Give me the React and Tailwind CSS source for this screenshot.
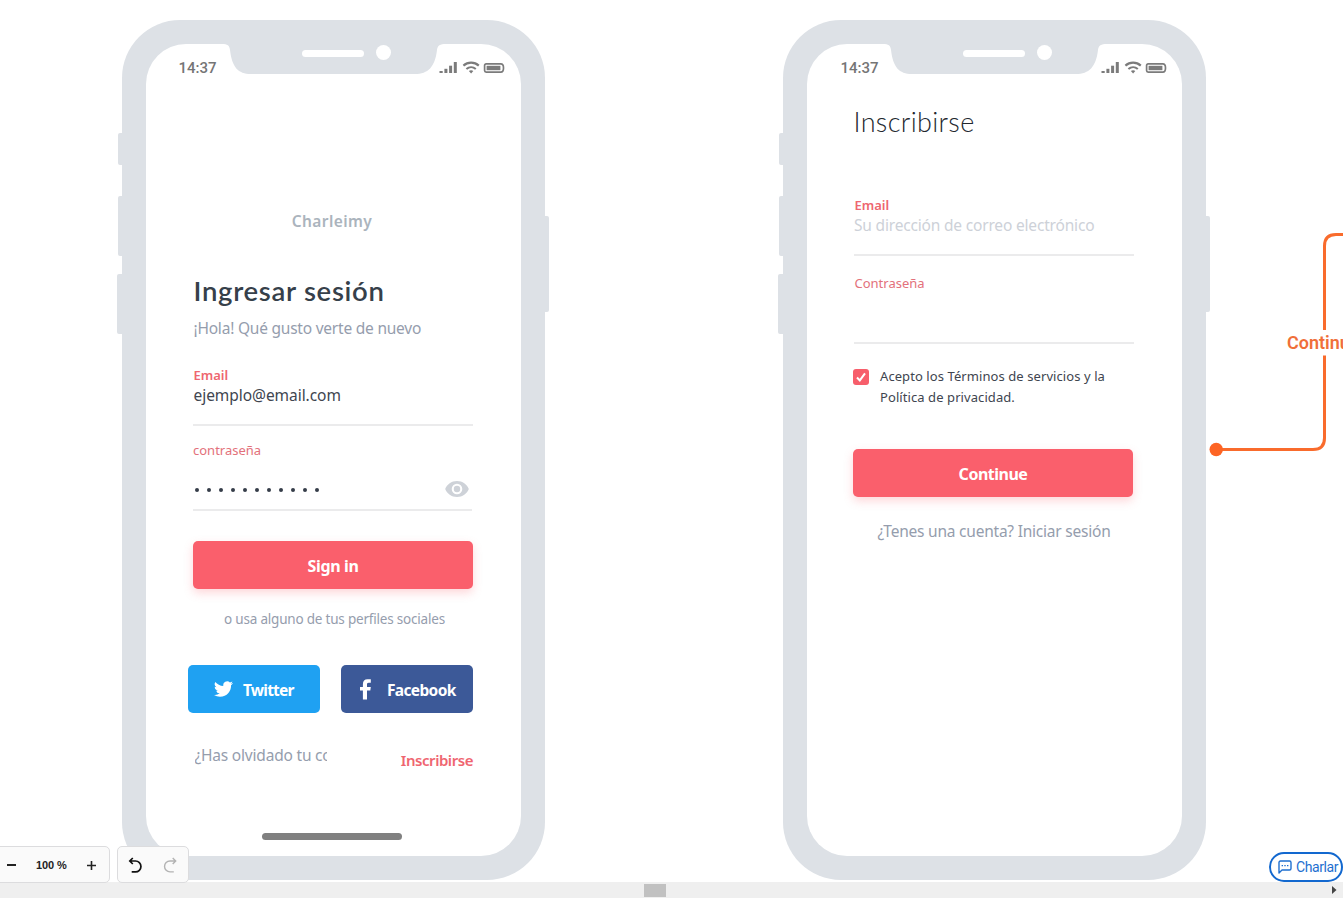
import React from "react";

const SANS = "font-['Noto_Sans','Liberation_Sans',sans-serif]";

function StatusIcons() {
  return (
    <svg width="68" height="14" viewBox="0 0 68 14" fill="#7b7b7b">
      <rect x="0.5" y="10" width="3.2" height="2" />
      <rect x="5.4" y="7.8" width="3" height="4.200" />
      <rect x="10.100" y="4.700" width="3" height="7.300" />
      <rect x="14.800" y="1" width="3" height="11" />
      <g fill="none" stroke="#7b7b7b" strokeWidth="2.100">
        <path d="M24.400 4.600C28.800 .6 35.400 .6 39.800 4.600" />
        <path d="M27.400 8c2.800-2.400 6.600-2.400 9.400 0" />
      </g>
      <path d="M29.900 10c1.300-1 3.100-1 4.400 0l-2.200 2.400z" />
      <path
        d="M47.200 2.900h14.600c1.800 0 2.700 1.700 2.700 4.100s-.9 4.100-2.700 4.100H47.200c-1 0-1.600-.6-1.600-1.600V4.500c0-1 .6-1.600 1.600-1.600z"
        fill="none"
        stroke="#7b7b7b"
        strokeWidth="1.700"
      />
      <rect x="47.600" y="4.800" width="13.800" height="4.400" />
    </svg>
  );
}

function Phone({ className, timeShift, iconShift, children }) {
  return (
    <div className={`absolute top-[19.5px] h-[860px] w-[423px] rounded-[58px] bg-[#dde1e6] p-6 ${className}`}>
      <div className="absolute -left-[4px] top-[113.500px] h-8 w-1 rounded-l-xs bg-[#dde1e6]" />
      <div className="absolute -left-[4px] top-[176.500px] h-[60px] w-1 rounded-l-xs bg-[#dde1e6]" />
      <div className="absolute -left-[5px] top-[254.500px] h-[60px] w-[5px] rounded-l-xs bg-[#dde1e6]" />
      <div className="absolute -right-[3.500px] top-[196.500px] h-24 w-1 rounded-r-xs bg-[#dde1e6]" />
      <div className="relative flex h-full w-full flex-col rounded-[40px] bg-white">
        <svg className="absolute -top-px left-[76px]" width="224" height="32" viewBox="0 0 224 32">
          <path
            d="M0 0V1C5.500 1 7.500 2.500 8 7C10 24 16 31 29 31H193C206 31 213 24 215 7C215.500 2.500 218 1 224 1V0Z"
            fill="#dde1e6"
          />
        </svg>
        <div className="absolute left-[156px] top-[6px] h-[7px] w-[62px] rounded-full bg-white" />
        <div className="absolute left-[230px] top-[1px] size-[15px] rounded-full bg-white" />
        <div className="flex h-12 shrink-0 items-center justify-between pl-[32.500px] pr-[14px]">
          <span className={`pt-[2px] font-['Roboto',sans-serif] text-[15px] font-medium text-[#757575] ${timeShift}`}>14:37</span>
          <span className={iconShift}>
            <StatusIcons />
          </span>
        </div>
        {children}
      </div>
    </div>
  );
}

function PrimaryButton({ children, className }) {
  return (
    <button
      className={`flex h-12 w-[280px] shrink-0 items-center justify-center rounded-[5px] bg-[#fa5f6c] pt-[2px] text-[16px] font-bold text-white shadow-[0_4px_10px_rgba(250,95,108,0.250)] ${className}`}
    >
      {children}
    </button>
  );
}

function SignInScreen() {
  return (
    <div className={`flex flex-1 flex-col pl-[47px] pr-[48px] ${SANS}`}>
      <div className="mt-[119px] h-5 pr-[2px] text-center text-[15.500px] font-semibold leading-5 tracking-[0.400px] text-[#abb4bd]">
        Charleimy
      </div>
      <h1 className="mt-[44px] h-8 whitespace-nowrap pl-[0.500px] font-['Lato',sans-serif] text-[27.500px] font-semibold leading-8 tracking-[0.700px] text-[#36404a]">
        Ingresar sesión
      </h1>
      <p className="mt-[9px] h-6 whitespace-nowrap pl-[0.500px] text-[15.500px] leading-6 tracking-[-0.220px] text-[#959dad]">
        ¡Hola! Qué gusto verte de nuevo
      </p>
      <label className="mt-[25px] h-5 pl-[0.500px] text-[13px] font-semibold leading-5 text-[#ee6670]">Email</label>
      <div className="h-[41px] border-b-2 border-[#ebebec] pl-[0.500px] text-[15.500px] leading-5 tracking-[-0.050px] text-[#40454f]">
        ejemplo@email.com
      </div>
      <label className="mt-[14px] h-5 text-[13px] leading-5 text-[#e3717b]">contraseña</label>
      <div className="mr-[1px] flex h-[51px] items-center justify-between border-b-2 border-[#ebebec] pl-[1.500px] pr-[3px] pt-[9px]">
        <div className="flex gap-[8.100px] pt-[3px]">
          {Array.from({ length: 11 }, (_, i) => (
            <span key={i} className="size-[4px] rounded-full bg-[#353d48]" />
          ))}
        </div>
        <svg width="24" height="16" viewBox="0 0 24 16">
          <path
            fillRule="evenodd"
            fill="#ced2d8"
            d="M12 0C6.500 0 2 3.300 .2 8 2 12.700 6.500 16 12 16s10-3.300 11.800-8C22 3.300 17.500 0 12 0zm0 13.300a5.300 5.300 0 1 1 0-10.600 5.300 5.300 0 0 1 0 10.600zm0-8.500a3.200 3.200 0 1 0 0 6.400 3.200 3.200 0 0 0 0-6.400z"
          />
        </svg>
      </div>
      <PrimaryButton className="mt-[30px] tracking-[-0.350px]">Sign in</PrimaryButton>
      <p className="mt-[20px] h-5 whitespace-nowrap pl-[3px] text-center text-[13.500px] leading-5 tracking-[-0.200px] text-[#959dad]">
        o usa alguno de tus perfiles sociales
      </p>
      <div className="-ml-[5px] mt-[36px] flex gap-[21px]">
        <button className="flex h-12 w-[132px] shrink-0 items-center gap-[10px] rounded-[5px] bg-[#1fa1f2] pl-[26px] text-[15.500px] font-bold tracking-[-0.800px] text-white">
          <svg width="19" height="16" viewBox="0 0 24 20" fill="currentColor">
            <path d="M23.950 2.570a10 10 0 0 1-2.820.770 4.960 4.960 0 0 0 2.160-2.720c-.950.550-2 .950-3.130 1.180a4.920 4.920 0 0 0-8.380 4.480C7.690 6.100 4.070 4.130 1.640 1.160a4.920 4.920 0 0 0 1.520 6.570 4.900 4.900 0 0 1-2.230-.610v.060a4.920 4.920 0 0 0 3.950 4.830 5 5 0 0 1-2.210.080 4.940 4.940 0 0 0 4.600 3.420A9.870 9.870 0 0 1 0 17.540a14 14 0 0 0 7.550 2.210c9.050 0 14-7.500 14-13.980 0-.210 0-.420-.020-.630a9.940 9.940 0 0 0 2.460-2.550z" />
          </svg>
          <span className="pt-[4px]">Twitter</span>
        </button>
        <button className="flex h-12 w-[132px] shrink-0 items-center gap-[16px] rounded-[5px] bg-[#3c5998] pl-[19px] text-[15.500px] font-bold tracking-[-0.650px] text-white">
          <svg className="mt-[2px]" width="11" height="21" viewBox="0 0 11 21" fill="currentColor">
            <path d="M2.900 20.500v-9.100H0V7.900h2.900V5.200C2.900 2 4.600.300 7.500.300H10.800v3.500H8.700C7.300 3.800 7 4.500 7 5.600v2.300h3.800l-.5 3.500H7v9.100z" />
          </svg>
          <span className="pt-[4px]">Facebook</span>
        </button>
      </div>
      <div className="mt-[30px] flex justify-between">
        <div className="ml-[1.500px] h-6 w-[132px] overflow-hidden whitespace-nowrap text-[15.500px] leading-6 tracking-[-0.200px] text-[#959dad]">
          ¿Has olvidado tu contraseña?
        </div>
        <a className="mt-[5px] h-6 text-[15px] font-semibold leading-6 tracking-[-0.450px] text-[#ef6570]">Inscribirse</a>
      </div>
      <div className="ml-[69px] mt-[61px] h-[7px] w-[140px] rounded-full bg-[#808080]" />
    </div>
  );
}

function SignUpScreen() {
  return (
    <div className={`flex flex-1 flex-col pl-[46px] pr-[49px] ${SANS}`}>
      <h1 className="mt-[14px] h-8 whitespace-nowrap pl-[0.500px] font-['Lato',sans-serif] text-[27px] font-light leading-8 tracking-[0.350px] text-[#22272e]">
        Inscribirse
      </h1>
      <label className="mt-[57px] h-5 pl-[1.500px] text-[13px] font-semibold leading-5 text-[#ee6670]">Email</label>
      <div className="ml-px mr-[-1px] h-[41px] whitespace-nowrap border-b-2 border-[#ebebec] text-[15.500px] leading-5 tracking-[-0.180px] text-[#cdd1d8]">
        Su dirección de correo electrónico
      </div>
      <label className="mt-[17px] h-5 pl-[1.500px] text-[13px] leading-5 text-[#e3717b]">Contraseña</label>
      <div className="ml-px mr-[-1px] h-[51px] border-b-2 border-[#ebebec]" />
      <div className="mt-[22px] flex h-[42px] gap-[11px]">
        <svg className="mt-[3px] shrink-0" width="16" height="16" viewBox="0 0 16 16">
          <rect width="16" height="16" rx="3" fill="#f75e6b" />
          <path d="M4 8.500L6.800 11.400L12 4.300" fill="none" stroke="#fff" strokeWidth="2" />
        </svg>
        <p className="whitespace-nowrap text-[13px] leading-[21px] tracking-[0.080px] text-[#40454f]">
          Acepto los Términos de servicios y la
          <br />
          Política de privacidad.
        </p>
      </div>
      <PrimaryButton className="mt-[41px] tracking-[-0.500px]">Continue</PrimaryButton>
      <p className="mt-[22px] h-6 whitespace-nowrap pl-[2px] text-center text-[15.500px] leading-6 tracking-[-0.220px] text-[#959dad]">
        ¿Tenes una cuenta? Iniciar sesión
      </p>
    </div>
  );
}

function Connector() {
  return (
    <div className="absolute left-[1209px] top-[228px] h-[236px] w-[134px]">
      <svg width="134" height="236" viewBox="0 0 134 236" fill="none">
        <path d="M134 6.500H127Q115.500 6.500 115.500 18V102" stroke="#f96b2c" strokeWidth="3" />
        <path d="M115.500 127.500V210Q115.500 221.500 104 221.500H7" stroke="#f96b2c" strokeWidth="3" />
        <circle cx="7.200" cy="221.500" r="6.700" fill="#fd6424" />
      </svg>
      <span className="absolute left-[78px] top-[103px] font-['Roboto',sans-serif] text-[18px] font-semibold leading-6 text-[#f06f39]">
        Continue
      </span>
    </div>
  );
}

function CanvasControls() {
  return (
    <div className="absolute -left-[6px] bottom-[-1px] flex h-[37px] gap-[7px]">
      <div className="flex w-[116px] items-center rounded-[5px] border border-[#dcdcde] bg-[#fafafa] pl-[12px] pt-px font-['Liberation_Sans',sans-serif] font-bold text-[#222]">
        <span className="h-[2px] w-[9px] bg-[#222]" />
        <span className="ml-[20px] w-[32px] whitespace-nowrap pt-px text-[11px] tracking-[-0.100px]">100 %</span>
        <svg className="ml-[18.500px]" width="9" height="9" viewBox="0 0 9 9" stroke="#222" strokeWidth="1.600">
          <path d="M0 4.500H9M4.500 0V9" />
        </svg>
      </div>
      <div className="flex w-[72px] items-center gap-[20px] rounded-[5px] border border-[#dcdcde] bg-[#fafafa] pl-[10px] pt-[2px]">
        <svg width="15" height="17" viewBox="0 0 15 17" fill="none" stroke="#111" strokeWidth="1.700">
          <path d="M4.800 1L1.800 4L4.800 7M1.800 4H7.500A5.300 5.300 0 0 1 7.500 14.900H3.700" />
        </svg>
        <svg width="15" height="17" viewBox="0 0 15 17" fill="none" stroke="#b3b3b3" strokeWidth="1.400">
          <path d="M9.700 1L12.700 4L9.700 7M12.700 4H7A5.300 5.300 0 0 0 7 14.900H10.800" />
        </svg>
      </div>
    </div>
  );
}

function ChatButton() {
  return (
    <button className="absolute bottom-0 left-[1269px] flex h-[30px] w-[74px] items-center gap-[4px] rounded-full border-2 border-[#1268cf] bg-white pl-[7px] font-['Roboto',sans-serif] text-[14px] tracking-[-0.400px] text-[#1e6fd0]">
      <svg className="shrink-0" width="14" height="14" viewBox="0 0 14 14" fill="none" stroke="#1e6fd0" strokeWidth="1.400">
        <path d="M1 13V2.500Q1 1 2.500 1H11.500Q13 1 13 2.500V8.500Q13 10 11.500 10H4Z" strokeLinejoin="round" />
        <path d="M3.600 5.600H5M6.300 5.600H7.700M9 5.600H10.400" />
      </svg>
      <span className="pt-px">Charlar</span>
    </button>
  );
}

export default function App() {
  return (
    <div className="flex h-[898px] w-[1343px] flex-col overflow-hidden bg-white">
      <main className="relative h-[882px] shrink-0">
        <Phone className="left-[122px]" timeShift="" iconShift="">
          <SignInScreen />
        </Phone>
        <Phone className="left-[783px]" timeShift="ml-px" iconShift="-mr-px">
          <SignUpScreen />
        </Phone>
        <Connector />
        <CanvasControls />
        <ChatButton />
      </main>
      <div className="flex h-4 shrink-0 items-center justify-between bg-[#efefef] pl-[644px] pr-[6px]">
        <div className="h-[13px] w-[22px] bg-[#c1c1c1]" />
        <svg width="5" height="8" viewBox="0 0 5 8" fill="#444">
          <path d="M0 0L4.500 4L0 8Z" />
        </svg>
      </div>
    </div>
  );
}
